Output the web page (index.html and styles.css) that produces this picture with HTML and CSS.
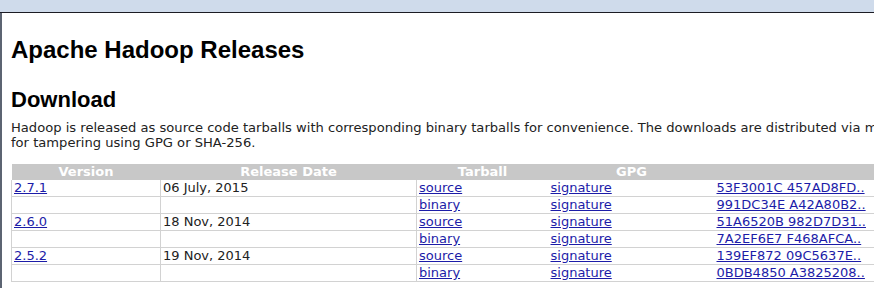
FILE: index.html
```html
<!DOCTYPE html>
<html>
<head>
<meta charset="utf-8">
<link rel="stylesheet" href="styles.css">
</head>
<body>
<div class="topbar"></div>
<div class="main">
  <h1 class="title">Apache Hadoop Releases</h1>
  <h2 class="section">Download</h2>
  <p class="intro">Hadoop is released as source code tarballs with corresponding binary tarballs for convenience. The downloads are distributed via mirror sites and should be checked<br>for tampering using GPG or SHA-256.</p>
  <table class="releases">
    <colgroup>
      <col class="c-ver"><col class="c-date"><col class="c-tar"><col class="c-gpg"><col class="c-sha">
    </colgroup>
    <thead>
      <tr><th>Version</th><th>Release Date</th><th>Tarball</th><th>GPG</th><th>SHA-256</th></tr>
    </thead>
    <tbody>
      <tr><td class="lb"><a href="#">2.7.1</a></td><td class="lb">06 July, 2015</td><td class="lb"><a href="#">source</a></td><td><a href="#">signature</a></td><td><a href="#">53F3001C 457AD8FD..</a></td></tr>
      <tr><td class="lb"></td><td class="lb"></td><td class="lb"><a href="#">binary</a></td><td><a href="#">signature</a></td><td><a href="#">991DC34E A42A80B2..</a></td></tr>
      <tr><td class="lb"><a href="#">2.6.0</a></td><td class="lb">18 Nov, 2014</td><td class="lb"><a href="#">source</a></td><td><a href="#">signature</a></td><td><a href="#">51A6520B 982D7D31..</a></td></tr>
      <tr><td class="lb"></td><td class="lb"></td><td class="lb"><a href="#">binary</a></td><td><a href="#">signature</a></td><td><a href="#">7A2EF6E7 F468AFCA..</a></td></tr>
      <tr><td class="lb"><a href="#">2.5.2</a></td><td class="lb">19 Nov, 2014</td><td class="lb"><a href="#">source</a></td><td><a href="#">signature</a></td><td><a href="#">139EF872 09C5637E..</a></td></tr>
      <tr><td class="lb"></td><td class="lb"></td><td class="lb"><a href="#">binary</a></td><td><a href="#">signature</a></td><td><a href="#">0BDB4850 A3825208..</a></td></tr>
    </tbody>
  </table>
</div>
</body>
</html>
```
FILE: styles.css
```css
html, body {
  margin: 0;
  padding: 0;
  background: #ffffff;
  overflow: hidden;
}
body {
  font-family: "DejaVu Sans", Verdana, sans-serif;
  font-size: 13px;
  color: #222222;
  width: 874px;
  height: 288px;
}
.topbar {
  height: 12px;
  background: #cfdbeb;
  border-bottom: 1px solid #1c1c24;
}
.main {
  border-left: 2px solid #5c6472;
  padding-left: 9px;
  height: 275px;
}
.title {
  font-family: "Liberation Sans", Arial, sans-serif;
  font-size: 24px;
  font-weight: bold;
  color: #000;
  margin: 0;
  padding-top: 23px;
  line-height: 28px;
}
.section {
  font-family: "Liberation Sans", Arial, sans-serif;
  font-size: 22px;
  font-weight: bold;
  color: #000;
  margin: 0;
  padding-top: 23px;
  line-height: 26px;
}
.intro {
  margin: 7px 0 0 0;
  font-size: 13.1px;
  line-height: 15px;
  white-space: nowrap;
}
.releases {
  margin-top: 14px;
  border-collapse: collapse;
  table-layout: fixed;
  width: 1100px;
  font-size: 13px;
}
.c-ver { width: 149px; }
.c-date { width: 256px; }
.c-tar { width: 132px; }
.c-gpg { width: 166px; }
.c-sha { width: 397px; }
.releases th {
  background: #c8c8c8;
  color: #ffffff;
  font-weight: bold;
  height: 16px;
  line-height: 16px;
  padding: 0;
  text-align: center;
}
.releases td {
  height: 16px;
  line-height: 16px;
  padding: 0 2px;
  border-bottom: 1px solid #d2d2d2;
  white-space: nowrap;
  color: #222;
}
.releases td.lb {
  border-left: 1px solid #d2d2d2;
}
.releases a {
  color: #1c1ca8;
  text-decoration: underline;
}
```
